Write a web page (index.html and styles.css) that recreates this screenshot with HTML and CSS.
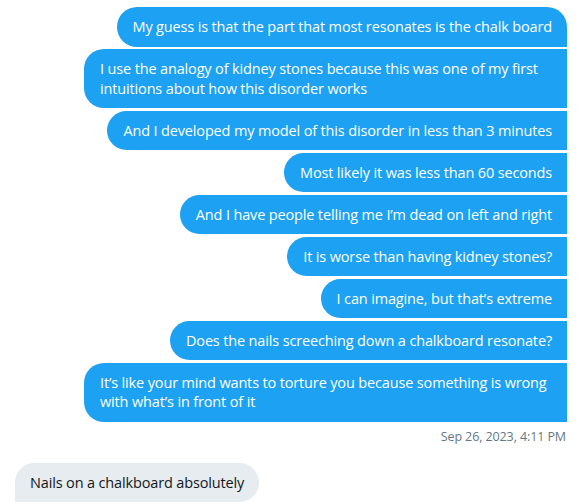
FILE: index.html
```html
<!DOCTYPE html>
<html>
<head>
  <title>Messages</title>
  <link rel="stylesheet" href="styles.css">
</head>
<body>
  <div class="conversation">
    <div class="msg sent first"><div class="bubble">My guess is that the part that most resonates is the chalk board</div></div>
    <div class="msg sent"><div class="bubble">I use the analogy of kidney stones because this was one of my first intuitions about how this disorder works</div></div>
    <div class="msg sent"><div class="bubble">And I developed my model of this disorder in less than 3 minutes</div></div>
    <div class="msg sent"><div class="bubble">Most likely it was less than 60 seconds</div></div>
    <div class="msg sent"><div class="bubble">And I have people telling me I’m dead on left and right</div></div>
    <div class="msg sent"><div class="bubble">It is worse than having kidney stones?</div></div>
    <div class="msg sent"><div class="bubble">I can imagine, but that’s extreme</div></div>
    <div class="msg sent"><div class="bubble">Does the nails screeching down a chalkboard resonate?</div></div>
    <div class="msg sent last"><div class="bubble">It’s like your mind wants to torture you because something is wrong with what’s in front of it</div></div>
    <div class="timestamp">Sep 26, 2023, 4:11 PM</div>

    <div class="msg received"><div class="bubble">Nails on a chalkboard absolutely</div></div>
  </div>
</body>
</html>
```

FILE: styles.css
```css
body {
  margin: 0;
  padding: 0;
  background: #fff;
  font-family: "Open Sans", "Noto Sans", sans-serif;
  overflow: hidden;
}

.conversation {
  display: flex;
  flex-direction: column;
  gap: 2.5px;
  padding: 7px 15px 0 15px;
}

.msg {
  display: flex;
}

.msg.sent {
  justify-content: flex-end;
}

.bubble {
  max-width: 452px;
  padding: 10px 15px 10px 16px;
  font-size: 14.5px;
  letter-spacing: -0.15px;
  line-height: 19.5px;
  border-radius: 20px;
}

.sent .bubble {
  background: #1da1f2;
  color: #fff;
  border-top-right-radius: 0;
  border-bottom-right-radius: 0;
}

.sent.first .bubble {
  border-top-right-radius: 20px;
}

.timestamp {
  text-align: right;
  font-size: 12.5px;
  letter-spacing: -0.1px;
  line-height: 16px;
  color: #657786;
  margin-top: 5px;
  margin-bottom: 15px;
  padding-right: 1px;
}

.received .bubble {
  background: #e6ecf0;
  color: #14171a;
  padding-left: 15px;
  padding-right: 15px;
  border-bottom-left-radius: 0;
}
```
